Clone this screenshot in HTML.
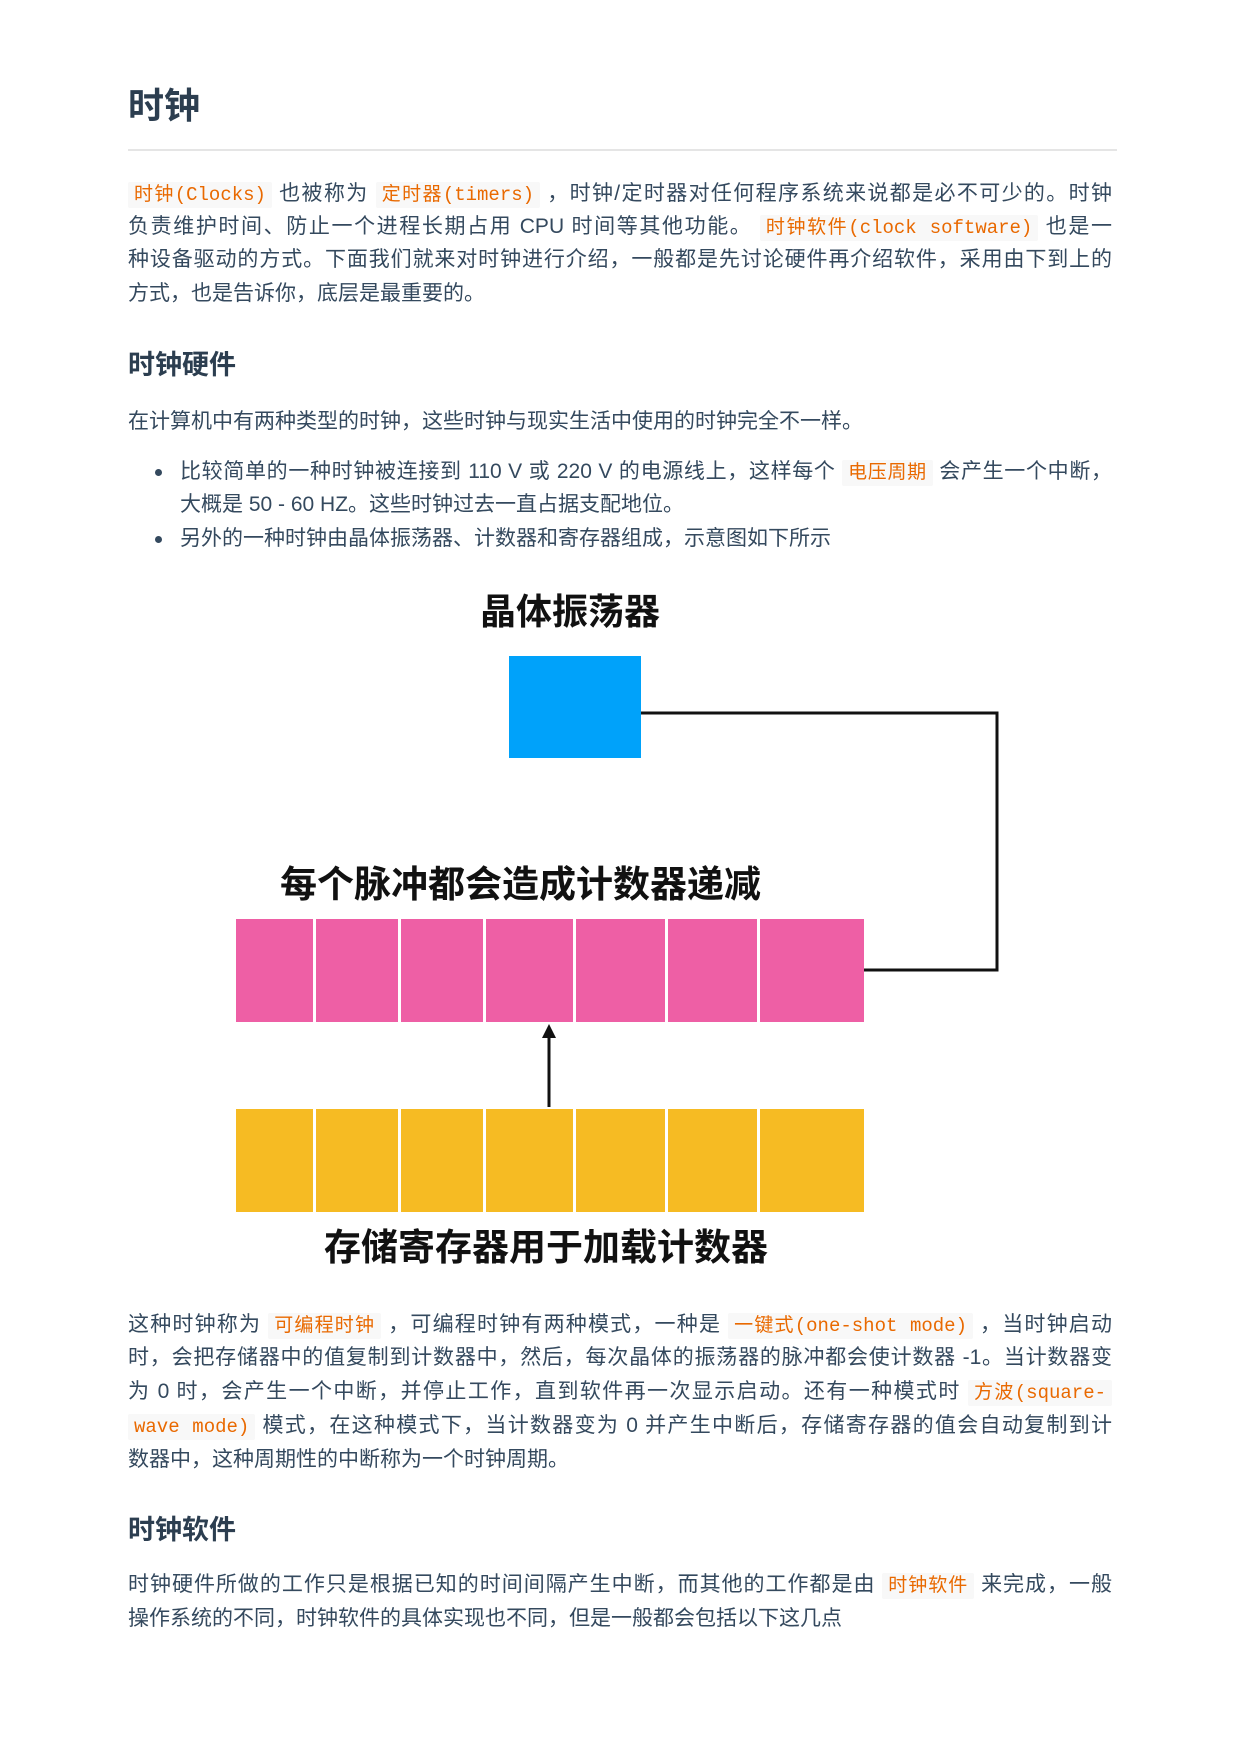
<!DOCTYPE html>
<html><head><meta charset="utf-8"><style>
body{margin:0;width:1240px;height:1754px;background:#fff;position:relative;font-family:"Liberation Sans","Noto Sans CJK SC",sans-serif;color:#34495e;overflow:hidden}
.l{position:absolute;left:128px;width:984px;height:34px;line-height:34px;font-size:21px;white-space:nowrap;text-align:justify;text-align-last:justify}
.l.e{text-align-last:left}
.b{left:180px;width:932px}
code{font-family:"Liberation Mono","Noto Sans CJK SC",monospace;font-size:19px;color:#e96900;background:#f8f8f8;padding:2px 6px;border-radius:2px}
h1,h2{position:absolute;left:128px;margin:0;color:#2c3e50;font-weight:600}
h1{top:84px;font-size:36px;line-height:44px}
h2{font-size:27px;line-height:34px}
.rule{position:absolute;left:128px;width:989px;top:149px;height:2px;background:#e5e5e5}
.dot{position:absolute;left:155px;width:7px;height:7px;border-radius:50%;background:#34495e}
.d{position:absolute;font-weight:bold;color:#111;white-space:nowrap;line-height:1}
.cell{position:absolute;height:103px}
#dg{position:absolute;left:-4px;top:-6px;width:1240px;height:1754px}
</style></head><body>
<h1>时钟</h1>
<div class="rule"></div>
<div class="l" style="top:177px"><code>时钟(Clocks)</code> 也被称为 <code>定时器(timers)</code> ，时钟/定时器对任何程序系统来说都是必不可少的。时钟</div>
<div class="l" style="top:210px">负责维护时间、防止一个进程长期占用 CPU 时间等其他功能。 <code>时钟软件(clock software)</code> 也是一</div>
<div class="l" style="top:243px">种设备驱动的方式。下面我们就来对时钟进行介绍，一般都是先讨论硬件再介绍软件，采用由下到上的</div>
<div class="l e" style="top:277px">方式，也是告诉你，底层是最重要的。</div>
<h2 style="top:348px">时钟硬件</h2>
<div class="l e" style="top:405px">在计算机中有两种类型的时钟，这些时钟与现实生活中使用的时钟完全不一样。</div>
<div class="dot" style="top:469px"></div>
<div class="l b" style="top:455px">比较简单的一种时钟被连接到 110 V 或 220 V 的电源线上，这样每个 <code>电压周期</code> 会产生一个中断，</div>
<div class="l b e" style="top:488px">大概是 50 - 60 HZ。这些时钟过去一直占据支配地位。</div>
<div class="dot" style="top:536px"></div>
<div class="l b e" style="top:522px">另外的一种时钟由晶体振荡器、计数器和寄存器组成，示意图如下所示</div>

<div id="dg">
<div class="d" style="left:484px;top:600px;font-size:36px">晶体振荡器</div>
<div style="position:absolute;left:513px;top:662px;width:132px;height:102px;background:#00a2fa"></div>
<div class="d" style="left:284px;top:872px;font-size:37px">每个脉冲都会造成计数器递减</div>
<div class="cell" style="left:240px;top:925px;width:628px;background:#ee5fa5"></div>
<div class="cell" style="left:240px;top:1115px;width:628px;background:#f6bb23"></div>
<div style="position:absolute;left:317px;top:920px;width:3px;height:300px;background:#fff"></div>
<div style="position:absolute;left:402px;top:920px;width:3px;height:300px;background:#fff"></div>
<div style="position:absolute;left:487px;top:920px;width:3px;height:300px;background:#fff"></div>
<div style="position:absolute;left:577px;top:920px;width:3px;height:300px;background:#fff"></div>
<div style="position:absolute;left:669px;top:920px;width:3px;height:300px;background:#fff"></div>
<div style="position:absolute;left:761px;top:920px;width:3px;height:300px;background:#fff"></div>
<div style="position:absolute;left:230px;top:1028px;width:650px;height:87px;background:#fff"></div>
<svg style="position:absolute;left:0;top:0" width="1240" height="1754">
<polyline points="645,719 1001,719 1001,976 868,976" fill="none" stroke="#111" stroke-width="3"/>
<line x1="553" y1="1113" x2="553" y2="1042" stroke="#111" stroke-width="3"/>
<polygon points="553,1030 546,1044 560,1044" fill="#111"/>
</svg>
<div class="d" style="left:328px;top:1235px;font-size:37px">存储寄存器用于加载计数器</div>
</div>

<div class="l" style="top:1308px">这种时钟称为 <code>可编程时钟</code> ，可编程时钟有两种模式，一种是 <code>一键式(one-shot mode)</code> ，当时钟启动</div>
<div class="l" style="top:1341px">时，会把存储器中的值复制到计数器中，然后，每次晶体的振荡器的脉冲都会使计数器 -1。当计数器变</div>
<div class="l" style="top:1375px">为 0 时，会产生一个中断，并停止工作，直到软件再一次显示启动。还有一种模式时 <code>方波(square-</code></div>
<div class="l" style="top:1409px"><code>wave mode)</code> 模式，在这种模式下，当计数器变为 0 并产生中断后，存储寄存器的值会自动复制到计</div>
<div class="l e" style="top:1443px">数器中，这种周期性的中断称为一个时钟周期。</div>
<h2 style="top:1513px">时钟软件</h2>
<div class="l" style="top:1568px">时钟硬件所做的工作只是根据已知的时间间隔产生中断，而其他的工作都是由 <code>时钟软件</code> 来完成，一般</div>
<div class="l e" style="top:1602px">操作系统的不同，时钟软件的具体实现也不同，但是一般都会包括以下这几点</div>
</body></html>
